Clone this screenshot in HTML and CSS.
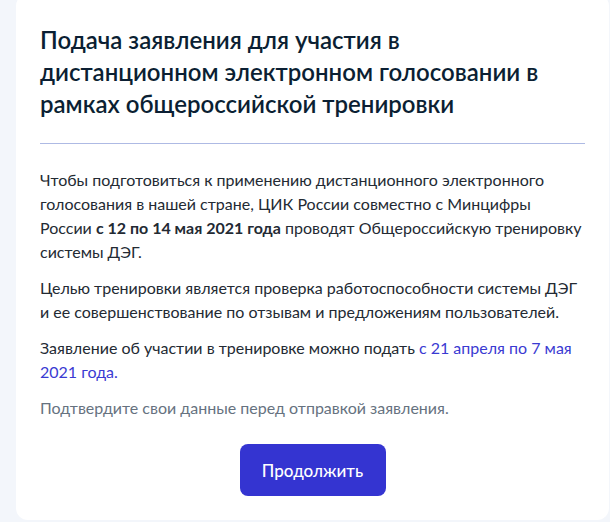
FILE: index.html
```html
<!DOCTYPE html>
<html lang="ru">
<head>
    <meta charset="UTF-8">
    <meta name="viewport" content="width=device-width, initial-scale=1.0">
    <title>Подача заявления</title>
    <link rel="stylesheet" href="styles.css">
</head>
<body>
    <div class="card">
        <h1 class="card-title">Подача заявления для участия в дистанционном электронном голосовании в рамках общероссийской тренировки</h1>
        <hr class="divider">
        <p>Чтобы подготовиться к применению дистанционного электронного голосования в нашей стране, ЦИК России совместно с Минцифры России <b>с 12 по 14 мая 2021 года</b> проводят Общероссийскую тренировку системы ДЭГ.</p>
        <p>Целью тренировки является проверка работоспособности системы ДЭГ и ее совершенствование по отзывам и предложениям пользователей.</p>
        <p>Заявление об участии в тренировке можно подать <span class="accent">с 21 апреля по 7 мая 2021 года.</span></p>
        <p class="hint">Подтвердите свои данные перед отправкой заявления.</p>
        <div class="actions">
            <button type="button" class="btn">Продолжить</button>
        </div>
    </div>
</body>
</html>
```

FILE: styles.css
```css
body {
    margin: 0;
    padding: 0 1px 2px 16px;
    background: #f3f6fb;
    font-family: Lato, "Open Sans", sans-serif;
    color: #0b1f33;
}

.card {
    background: #fff;
    border-radius: 12px;
    margin-top: -6px;
    padding: 30px 24px 24px;
    min-height: 472px;
}

.card-title {
    max-width: 530px;
    margin: 0;
    font-size: 24px;
    line-height: 32px;
    font-weight: 600;
    color: #0b1f33;
}

.divider {
    border: none;
    border-top: 1px solid #aebae4;
    margin: 23px 0 24px;
}

p {
    margin: 0 0 12px;
    font-size: 16px;
    line-height: 24px;
    color: #232a33;
}

b {
    font-weight: 700;
}

.accent {
    color: #3a3ad2;
}

.hint {
    color: #66727f;
    margin-top: 12px;
}

.actions {
    display: flex;
    justify-content: center;
    padding-top: 12px;
}

.btn {
    width: 146px;
    height: 52px;
    border: none;
    border-radius: 8px;
    background: #3434d1;
    color: #fff;
    font-family: Lato, "Open Sans", sans-serif;
    font-size: 17px;
    font-weight: 500;
    cursor: pointer;
}
```
